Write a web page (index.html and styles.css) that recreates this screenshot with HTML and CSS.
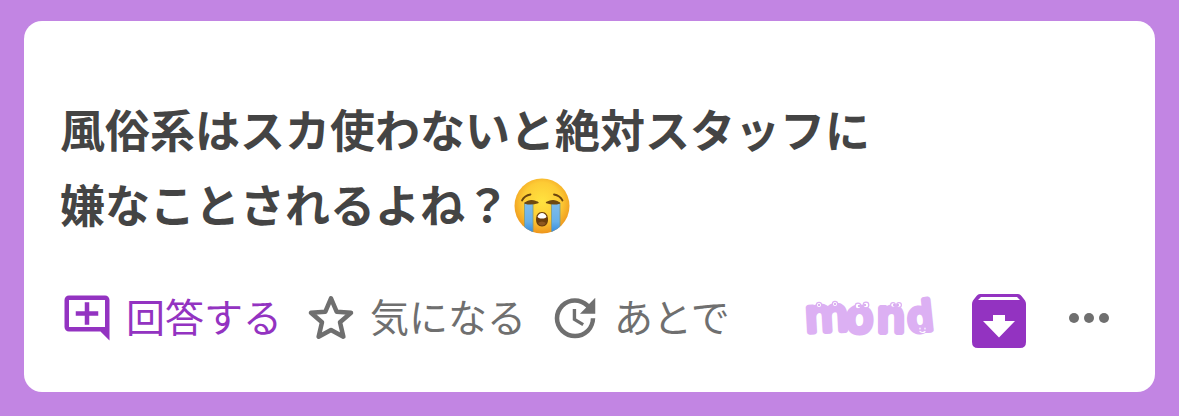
FILE: index.html
```html
<!DOCTYPE html>
<html lang="ja">

<head>
    <meta charset="UTF-8">
    <meta name="viewport" content="width=device-width, initial-scale=1.0">
    <title>mond</title>
    <link rel="stylesheet" href="styles.css">
</head>

<body>

    <article class="card">
        <p class="question">風俗系はスカ使わないと絶対スタッフに<br>嫌なことされるよね？<svg class="emoji" viewBox="0 0 56 56" role="img" aria-label="大泣き">
                <defs>
                    <radialGradient id="face" cx="50%" cy="42%" r="58%">
                        <stop offset="0" stop-color="#ffe33f" />
                        <stop offset="0.6" stop-color="#fdcb35" />
                        <stop offset="1" stop-color="#ee951c" />
                    </radialGradient>
                    <linearGradient id="tear" x1="0" y1="0" x2="0" y2="1">
                        <stop offset="0" stop-color="#7fbdea" />
                        <stop offset="0.6" stop-color="#67b0e8" />
                        <stop offset="1" stop-color="#2f86dc" />
                    </linearGradient>
                    <clipPath id="round"><circle cx="28" cy="28" r="27.5" /></clipPath>
                </defs>
                <circle cx="28" cy="28" r="27.5" fill="url(#face)" />
                <g clip-path="url(#round)">
                    <path d="M10.500 25h8.500v31h-8.500zM37.500 25h8.500v31h-8.500z" fill="url(#tear)" stroke="#7d9a80" stroke-width="0.800" />
                </g>
                <path d="M11 25Q16.500 20.500 24 24.500Q17 27 11 25zM32.500 24.500Q40 20.500 45.500 25Q39.500 27 32.500 24.500z" fill="#6f4a10" stroke="#6f4a10" stroke-width="1.400" stroke-linejoin="round" />
                <path d="M8 22.500Q10.500 17.500 16.500 16.500M40 16.500Q46 17.500 48.500 22.500" fill="none" stroke="#6b450e" stroke-width="1.800" stroke-linecap="round" />
                <path d="M28 34c4 0 6 3.500 6 7.500s-2 7-6 7-6-3-6-7 2-7.500 6-7.500z" fill="#6b3d0c" />
                <path d="M23.500 38.500q1.500-3.500 4.500-3.500t4.500 3.500q-.5 2-4.500 2t-4.500-2z" fill="#fff" />
                <path d="M24 45q4-3 8 0-1.500 2.500-4 2.500t-4-2.500z" fill="#8e571f" />
            </svg></p>

        <div class="actions">
            <button class="action answer">
                <svg class="icon" viewBox="0 0 24 24" aria-hidden="true">
                    <path d="M4 2c-1.100 0-2 .9-2 2v12c0 1.100.9 2 2 2h14l4 4V4c0-1.100-.9-2-2-2H4zm0 2h16v12H4z" fill-rule="evenodd" />
                    <path d="M11 5h2v4h4v2h-4v4h-2v-4H7V9h4z" />
                </svg>
                <span class="label">回答する</span>
            </button>
            <button class="action">
                <svg class="icon" viewBox="0 0 24 24" aria-hidden="true">
                    <path d="M12 3.300l2.500 5.900 6.400.5-4.900 4.200 1.500 6.400-5.500-3-5.500 3 1.500-6.400-4.900-4.200 6.400-.5z" fill="none" stroke="currentColor" stroke-width="2" stroke-linejoin="round" />
                </svg>
                <span class="label">気になる</span>
            </button>
            <button class="action">
                <svg class="icon" viewBox="0 0 24 24" aria-hidden="true">
                    <path d="M21 10.120h-6.780l2.740-2.820c-2.730-2.700-7.150-2.800-9.880-.1-2.730 2.710-2.730 7.080 0 9.790s7.150 2.710 9.880 0C18.320 15.650 19 14.080 19 12.100h2c0 1.980-.88 4.550-2.640 6.290-3.510 3.480-9.210 3.480-12.720 0-3.500-3.470-3.530-9.110-.02-12.580s9.140-3.470 12.650 0L21 3v7.120zM12.500 8v4.250l3.500 2.080-.72 1.210L11 13V8h1.500z" />
                </svg>
                <span class="label">あとで</span>
            </button>

            <a class="logo" href="#" aria-label="mond">
                <svg viewBox="0 0 134 60" aria-hidden="true">
                    <text class="logo-text" x="1 41 72 104" y="44" rotate="-3 0 0 -6">mon<tspan class="logo-d">d</tspan></text>
                    <g fill="#fff" stroke="#dcb0f3" stroke-width="1.200">
                        <circle cx="14" cy="17" r="2.600" />
                        <circle cx="30" cy="16" r="2.600" />
                        <circle cx="53" cy="18" r="2.800" />
                        <circle cx="61" cy="17" r="2.800" />
                        <circle cx="88" cy="17" r="2.400" />
                        <circle cx="94" cy="17" r="2.400" />
                    </g>
                    <g fill="#cf98eb">
                        <circle cx="14" cy="17" r="1" />
                        <circle cx="30" cy="16" r="1" />
                        <circle cx="54" cy="18" r="1" />
                        <circle cx="60" cy="17" r="1" />
                        <circle cx="89" cy="17" r="1" />
                        <circle cx="93" cy="17" r="1" />
                    </g>
                    <path d="M115 40v1M120 40v1M115 43.500q3 2 5 0" fill="none" stroke="#fff" stroke-width="1.200" stroke-linecap="round" />
                </svg>
            </a>
            <button class="icon-button save" aria-label="保存">
                <svg viewBox="0 0 54 54" aria-hidden="true">
                    <path d="M8 0h38q2 0 3.500 2l3.500 4.500q1 1.500 1 3.500v38q0 6-6 6H6q-6 0-6-6V10q0-2 1-3.500L4.500 2Q6 0 8 0z" />
                    <path d="M9 3h36l3 3H6zM21 21h12v6h10L27 43.500 11 27h10z" fill="#fff" />
                </svg>
            </button>
            <button class="icon-button more" aria-label="メニュー">
                <svg viewBox="0 0 24 24" aria-hidden="true">
                    <circle cx="6" cy="12" r="2" />
                    <circle cx="12" cy="12" r="2" />
                    <circle cx="18" cy="12" r="2" />
                </svg>
            </button>
        </div>
    </article>

</body>

</html>
```
FILE: styles.css
```css
* {
    box-sizing: border-box;
}

body {
    margin: 0;
    padding: 21px 24px 24px;
    background-color: #c285e3;
    font-family: "Noto Sans CJK JP", sans-serif;
}

.card {
    padding: 70px 36px 44px;
    border-radius: 18px;
    background-color: #fff;
}

.question {
    margin: 0 0 47px;
    color: #444;
    font-size: 45px;
    font-weight: 700;
    line-height: 75px;
}

.emoji {
    width: 56px;
    height: 56px;
    margin-left: 4px;
    vertical-align: -11px;
}

.actions {
    display: flex;
    align-items: center;
    height: 60px;
}

button {
    margin: 0;
    padding: 0;
    border: none;
    background: none;
    font-family: inherit;
    cursor: pointer;
}

svg {
    fill: currentColor;
}

.action {
    display: flex;
    align-items: center;
    gap: 12px;
    margin-right: 22px;
    color: #6f6f6f;
    font-size: 39px;
    line-height: 54px;
    white-space: nowrap;
}

.label {
    padding-bottom: 6px;
}

.answer {
    color: #9333c1;
}

.icon {
    width: 54px;
    height: 54px;
}

.logo {
    margin-left: auto;
}

.logo svg {
    display: block;
    width: 134px;
    height: 60px;
    overflow: visible;
}

.logo-text {
    fill: #dcb0f3;
    stroke: #dcb0f3;
    stroke-width: 6px;
    stroke-linejoin: round;
    font-family: "DejaVu Sans", sans-serif;
    font-size: 44px;
}

.logo-d {
    font-size: 40px;
}

.icon-button svg {
    display: block;
    width: 100%;
    height: 100%;
}

.save {
    align-self: flex-end;
    width: 54px;
    height: 54px;
    margin: 0 33px;
    color: #9333c1;
}

.more {
    width: 60px;
    height: 60px;
    color: #6f6f6f;
}
```
